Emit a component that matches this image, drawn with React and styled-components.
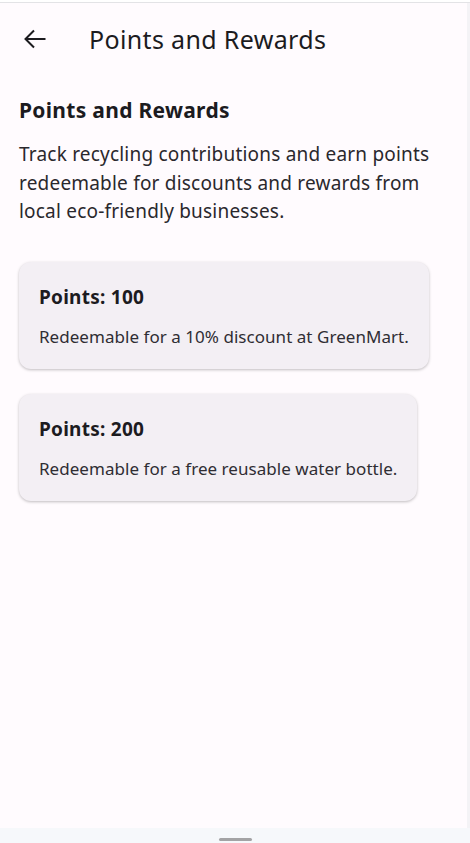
import React from 'react'
import styled, { createGlobalStyle } from 'styled-components'

const GlobalStyle = createGlobalStyle`
  html, body {
    margin: 0;
    padding: 0;
    background: #fdfcfe;
  }
  body {
    font-family: "Noto Sans", "Open Sans", sans-serif;
    color: #1c1b1f;
  }
`

const Frame = styled.div`
  height: 843px;
  display: flex;
  flex-direction: column;
  background: #f6f8fb;
`

const TopEdge = styled.div`
  height: 2px;
  background: #ffffff;
  border-bottom: 1px solid #e3e3e6;
`

const Screen = styled.div`
  flex: 1;
  display: flex;
  background: #fffbfe;
  border-right: 3px solid #f4f3f6;
`

const Main = styled.div`
  flex: 1;
  display: flex;
  flex-direction: column;
`

const AppBar = styled.header`
  height: 72px;
  display: flex;
  align-items: center;
  padding: 0 0 0 24px;
  gap: 43px;
`

const BackButton = styled.button`
  width: 22px;
  height: 22px;
  padding: 0;
  border: none;
  background: none;
  display: flex;
  align-items: center;
  justify-content: center;
  color: #1c1b1f;
`

const BarTitle = styled.h1`
  margin: 0;
  font-size: 25px;
  font-weight: 400;
  letter-spacing: 0.35px;
`

const Content = styled.main`
  padding: 21px 19px;
  display: flex;
  flex-direction: column;
  align-items: flex-start;
`

const Heading = styled.h2`
  margin: 0 0 16px;
  font-size: 21px;
  font-weight: 700;
  line-height: 28px;
  letter-spacing: 0.3px;
`

const Intro = styled.p`
  margin: 0 0 36px;
  font-size: 19px;
  line-height: 28.5px;
  letter-spacing: 0.2px;
  color: #2a282d;
`

const RewardList = styled.div`
  display: flex;
  flex-direction: column;
  align-items: flex-start;
  gap: 25px;
`

const Card = styled.div`
  background: #f3eff4;
  border-radius: 12px;
  padding: 22px 20px 20px 20px;
  box-shadow: 0 1px 3px rgba(0, 0, 0, 0.25);
`

const CardTitle = styled.div`
  font-size: 19px;
  font-weight: 700;
  line-height: 26px;
  letter-spacing: 0.25px;
  margin-bottom: 15px;
`

const CardText = styled.div`
  font-size: 17px;
  line-height: 24px;
  letter-spacing: 0.04px;
  color: #2f2d33;
`

const NavBar = styled.div`
  height: 15px;
  display: flex;
  justify-content: center;
  align-items: flex-end;
`

const Handle = styled.div`
  width: 33px;
  height: 3px;
  margin-bottom: 2px;
  border-radius: 2px;
  background: #a3a3a5;
`

const rewards = [
  { points: 100, text: 'Redeemable for a 10% discount at GreenMart.' },
  { points: 200, text: 'Redeemable for a free reusable water bottle.' },
]

const ArrowBack = () => (
  <svg width="22" height="20" viewBox="0 0 22 20" fill="none" stroke="currentColor" strokeWidth="2">
    <path d="M1.5 10H21.5M10 1.5L1.5 10L10 18.5" />
  </svg>
)

export default function App() {
  return (
    <>
      <GlobalStyle />
      <Frame>
        <TopEdge />
        <Screen>
          <Main>
            <AppBar>
              <BackButton aria-label="Back">
                <ArrowBack />
              </BackButton>
              <BarTitle>Points and Rewards</BarTitle>
            </AppBar>
            <Content>
              <Heading>Points and Rewards</Heading>
              <Intro>
                Track recycling contributions and earn points redeemable for
                discounts and rewards from local eco-friendly businesses.
              </Intro>
              <RewardList>
                {rewards.map(r => (
                  <Card key={r.points}>
                    <CardTitle>Points: {r.points}</CardTitle>
                    <CardText>{r.text}</CardText>
                  </Card>
                ))}
              </RewardList>
            </Content>
          </Main>
        </Screen>
        <NavBar>
          <Handle />
        </NavBar>
      </Frame>
    </>
  )
}
